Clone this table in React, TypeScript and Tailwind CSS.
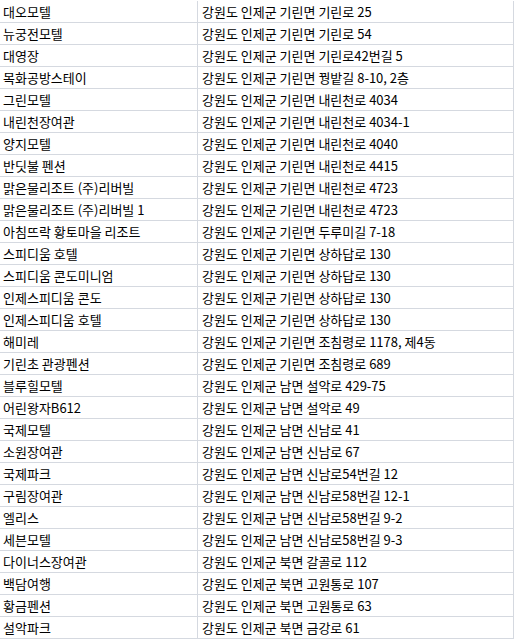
import React from "react";

const rows: [string, string][] = [
  ["대오모텔", "강원도 인제군 기린면 기린로 25"],
  ["뉴궁전모텔", "강원도 인제군 기린면 기린로 54"],
  ["대영장", "강원도 인제군 기린면 기린로42번길 5"],
  ["목화공방스테이", "강원도 인제군 기린면 꿩밭길 8-10, 2층"],
  ["그린모텔", "강원도 인제군 기린면 내린천로 4034"],
  ["내린천장여관", "강원도 인제군 기린면 내린천로 4034-1"],
  ["양지모텔", "강원도 인제군 기린면 내린천로 4040"],
  ["반딧불 펜션", "강원도 인제군 기린면 내린천로 4415"],
  ["맑은물리조트 (주)리버빌", "강원도 인제군 기린면 내린천로 4723"],
  ["맑은물리조트 (주)리버빌 1", "강원도 인제군 기린면 내린천로 4723"],
  ["아침뜨락 황토마을 리조트", "강원도 인제군 기린면 두루미길 7-18"],
  ["스피디움 호텔", "강원도 인제군 기린면 상하답로 130"],
  ["스피디움 콘도미니엄", "강원도 인제군 기린면 상하답로 130"],
  ["인제스피디움 콘도", "강원도 인제군 기린면 상하답로 130"],
  ["인제스피디움 호텔", "강원도 인제군 기린면 상하답로 130"],
  ["해미레", "강원도 인제군 기린면 조침령로 1178, 제4동"],
  ["기린초 관광펜션", "강원도 인제군 기린면 조침령로 689"],
  ["블루힐모텔", "강원도 인제군 남면 설악로 429-75"],
  ["어린왕자B612", "강원도 인제군 남면 설악로 49"],
  ["국제모텔", "강원도 인제군 남면 신남로 41"],
  ["소원장여관", "강원도 인제군 남면 신남로 67"],
  ["국제파크", "강원도 인제군 남면 신남로54번길 12"],
  ["구림장여관", "강원도 인제군 남면 신남로58번길 12-1"],
  ["엘리스", "강원도 인제군 남면 신남로58번길 9-2"],
  ["세븐모텔", "강원도 인제군 남면 신남로58번길 9-3"],
  ["다이너스장여관", "강원도 인제군 북면 갈골로 112"],
  ["백담여행", "강원도 인제군 북면 고원통로 107"],
  ["황금펜션", "강원도 인제군 북면 고원통로 63"],
  ["설악파크", "강원도 인제군 북면 금강로 61"],
];

export default function App() {
  return (
    <div
      className="w-[515px] h-[639px] bg-white pt-px overflow-hidden text-[13px] text-black"
      style={{ fontFamily: '"Noto Sans CJK KR", "Noto Sans", sans-serif' }}
    >
      {rows.map(([name, addr], i) => (
        <div key={i} className="flex h-[22px] border-b border-[#d5d9e0] w-[514px]">
          <div className="w-[198px] border-r border-[#d5d9e0] pl-[3px] flex items-center whitespace-nowrap overflow-hidden">
            {name}
          </div>
          <div className="w-[316px] border-r border-[#d5d9e0] pl-[4px] flex items-center whitespace-nowrap overflow-hidden">
            {addr}
          </div>
        </div>
      ))}
    </div>
  );
}
